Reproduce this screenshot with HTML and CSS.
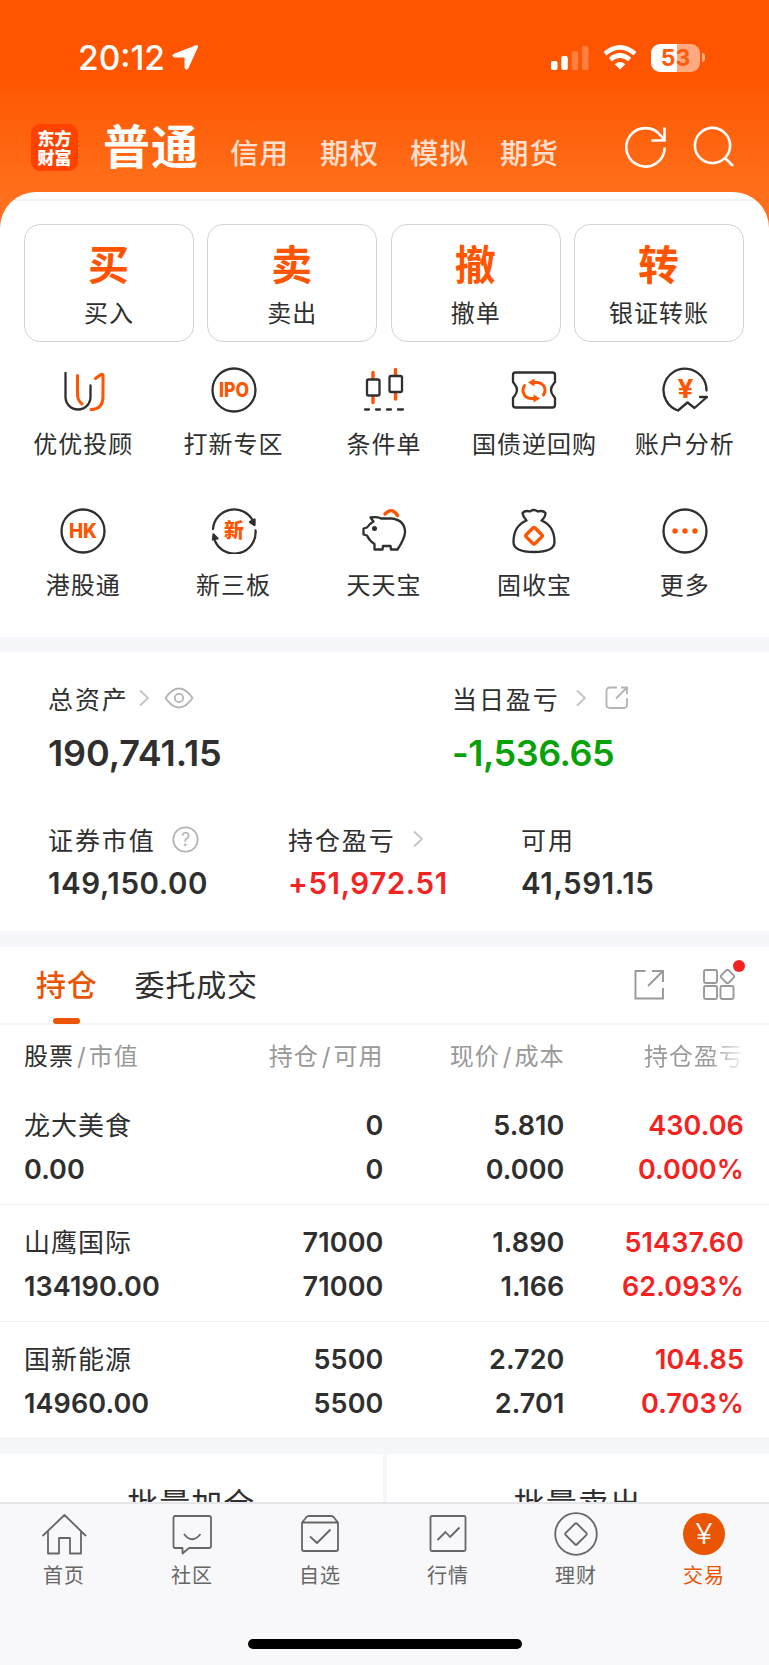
FILE: index.html
```html
<!DOCTYPE html>
<html lang="zh-CN">
<head>
  <meta charset="UTF-8" />
  <meta name="viewport" content="width=device-width, initial-scale=1.0" />
  <title>交易</title>
  <link rel="stylesheet" href="styles.css">
</head>
<body>
  <div class="app">
    <header class="header">
      <div class="status-bar">
        <span class="time">20:12</span>
        <svg class="location" width="28" height="27" viewBox="0 0 28 27"><path d="M25.5 1.5 2.5 10.5Q1 12 3 13H14V24Q15 26.5 16.8 24.500L26.500 3Q26.800 1 25.500 1.500Z" fill="#fff" stroke="#fff" stroke-width="1" stroke-linejoin="round"/></svg>
        <div class="status-icons">
          <svg width="38" height="24" viewBox="0 0 38 24" fill="#fff">
            <rect x="0" y="15" width="6.500" height="9" rx="2"/>
            <rect x="10.300" y="10" width="6.500" height="14" rx="2"/>
            <rect x="20.700" y="5" width="6.500" height="19" rx="2" opacity=".25"/>
            <rect x="31" y="0" width="6.500" height="24" rx="2" opacity=".25"/>
          </svg>
          <svg class="wifi" width="34" height="25" viewBox="0 0 34 25" fill="none" stroke="#fff" stroke-width="4.600">
            <path d="M2 8.700Q17-3.800 32 8.700"/>
            <path d="M7.300 14.500Q17 6.500 26.700 14.500"/>
            <path d="M17 24.500 11.700 19.200Q17 15 22.300 19.200Z" fill="#fff" stroke="none"/>
          </svg>
          <div class="battery"><span>53</span></div>
          <span class="battery-cap"></span>
        </div>
      </div>
      <nav class="account-nav">
        <div class="logo">东方<br>财富</div>
        <span class="account active">普通</span>
        <span class="account">信用</span>
        <span class="account">期权</span>
        <span class="account">模拟</span>
        <span class="account">期货</span>
        <svg class="refresh" width="42" height="42" viewBox="0 0 42 42" fill="none" stroke="#fff" stroke-width="2.600"><path d="M39.700 21.500A19.200 19.200 0 1 1 36 10L39.500 14M26.500 14.500H39.500V1.500"/></svg>
        <svg width="42" height="42" viewBox="0 0 42 42" fill="none" stroke="#fff" stroke-width="2.600"><circle cx="19.500" cy="19.500" r="17.600"/><path d="M31.500 31.500 40 40"/></svg>
      </nav>
    </header>

    <main class="content">
      <section class="sheet">
        <div class="trade-cards">
          <a class="trade-card"><b>买</b><span>买入</span></a>
          <a class="trade-card"><b>卖</b><span>卖出</span></a>
          <a class="trade-card"><b>撤</b><span>撤单</span></a>
          <a class="trade-card"><b>转</b><span>银证转账</span></a>
        </div>
        <div class="shortcuts">
          <a class="shortcut">
            <svg class="icon" viewBox="0 0 46 46"><path d="M5.500 6V30A12.500 12.500 0 0 0 30.500 30V18.500"/><path class="hot" d="M17.500 8.500V27Q17.500 33.500 22 37M35.500 11.500 41 7.500Q43 6.500 43 9V29Q43 42.500 31 42.500"/></svg>
            <span>优优投顾</span>
          </a>
          <a class="shortcut">
            <svg class="icon" viewBox="0 0 46 46"><circle cx="23" cy="23" r="21.500"/><text x="23" y="30" font-size="20" textLength="30" lengthAdjust="spacingAndGlyphs">IPO</text></svg>
            <span>打新专区</span>
          </a>
          <a class="shortcut">
            <svg class="icon" viewBox="0 0 46 46"><path class="hot thick" d="M12 5.500V11M12 30V35.500M34.500 2.500V8M34.500 26.500V32"/><rect x="6" y="12.500" width="12.500" height="16" rx="1.500"/><rect x="28.500" y="9" width="12.500" height="16" rx="1.500"/><path d="M4 42.500H8M15 42.500H19M26 42.500H30M37 42.500H42"/></svg>
            <span>条件单</span>
          </a>
          <a class="shortcut">
            <svg class="icon" viewBox="0 0 46 46"><path d="M4.500 5.500H41.500Q44 5.500 44 8V15L42.500 17Q37.500 23 42.500 29L44 31V38Q44 40.500 41.500 40.500H4.500Q2 40.500 2 38V31L3.500 29Q8.500 23 3.500 17L2 15V8Q2 5.500 4.500 5.500Z"/><path class="hot" d="M13.500 18.500C10 24 13 31 20 31.500H24M32.500 28C36 22 33 16 26 15.500H22"/><path class="hot fill" d="M23.500 11.500V19.500L17 15.500ZM22.500 27.500V35.500L29 31.500Z"/></svg>
            <span>国债逆回购</span>
          </a>
          <a class="shortcut">
            <svg class="icon" viewBox="0 0 46 46"><path d="M44.500 23.500A21.500 21.500 0 1 0 16 43.500L25.500 35.500 32.500 41 45 30H38"/><text class="yuan" x="23.500" y="31" font-size="26" textLength="16" lengthAdjust="spacingAndGlyphs">¥</text></svg>
            <span>账户分析</span>
          </a>
          <a class="shortcut">
            <svg class="icon" viewBox="0 0 46 46"><circle cx="23" cy="23" r="21.500"/><text x="23" y="30" font-size="20" textLength="28" lengthAdjust="spacingAndGlyphs">HK</text></svg>
            <span>港股通</span>
          </a>
          <a class="shortcut">
            <svg class="icon" viewBox="0 0 46 46"><path d="M2 21A21.200 21.200 0 0 1 42 13M44.500 22.500A21.200 21.200 0 0 1 4 33"/><path class="solid" d="M39 14 43.500 11.500 43.500 17ZM2 31.500 2.500 26.500 6.500 30.500Z"/><text class="cjk" x="23" y="30" font-size="20">新</text></svg>
            <span>新三板</span>
          </a>
          <a class="shortcut">
            <svg class="icon" viewBox="0 0 46 46"><path class="hot thick" d="M24 6Q31-1.500 36.500 7.500"/><path d="M12.500 13.500 9.500 9.500Q16 8.500 20 10.500H31Q44 12.500 44 24 44 30 36.500 41.500H30L29.500 38H22L21.500 41.500H13.500V36Q8.500 33 6 27.500L2.500 26.500V20.500L6 19.500Q8 16 12.500 13.500Z"/><circle class="eye" cx="13.500" cy="20.500" r="2.500"/></svg>
            <span>天天宝</span>
          </a>
          <a class="shortcut">
            <svg class="icon" viewBox="0 0 46 46"><path d="M15.500 12.500Q12 9 11.500 5 14 2 19 3.500 22.500 0.500 27 3.500 32 2 34.500 5 34.500 9 30.500 12.500C39 16 43.500 23 43.500 34Q43.500 44 23 44T2.500 34C2.500 23 7 16 15.500 12.500Z"/><rect class="hot thick" x="16.800" y="21.500" width="12.500" height="12.500" rx="1.500" transform="rotate(45 23 27.700)"/></svg>
            <span>固收宝</span>
          </a>
          <a class="shortcut">
            <svg class="icon" viewBox="0 0 46 46"><circle cx="23" cy="23" r="21.500"/><g class="dots"><circle cx="13" cy="23" r="2.700"/><circle cx="23" cy="23" r="2.700"/><circle cx="33" cy="23" r="2.700"/></g></svg>
            <span>更多</span>
          </a>
        </div>
      </section>

      <section class="assets">
        <div class="asset-row main-row">
          <div class="asset">
            <div class="asset-label">总资产
              <svg class="chevron" width="10" height="18" viewBox="0 0 10 18"><path d="M1 1.500 9 9 1 16.500"/></svg>
              <svg class="eye-icon" width="30" height="22" viewBox="0 0 30 22"><path d="M1.500 11Q8 1.500 15 1.500T28.500 11Q22 20.500 15 20.500T1.500 11Z"/><circle cx="15" cy="11" r="4.200"/></svg>
            </div>
            <div class="asset-value">190,741.15</div>
          </div>
          <div class="asset today">
            <div class="asset-label">当日盈亏
              <svg class="chevron" width="10" height="18" viewBox="0 0 10 18"><path d="M1 1.500 9 9 1 16.500"/></svg>
              <svg class="share-icon" width="24" height="24" viewBox="0 0 24 24"><path d="M12 1.500H5Q1.500 1.500 1.500 5V18.500Q1.500 22 5 22H18.500Q22 22 22 18.500V12M16 1.500H22V8M22 1.500 11 12.500"/></svg>
            </div>
            <div class="asset-value down">-1,536.65</div>
          </div>
        </div>
        <div class="asset-row sub-row">
          <div class="asset">
            <div class="asset-label">证券市值
              <svg class="help-icon" width="27" height="27" viewBox="0 0 27 27"><circle cx="13.500" cy="13.500" r="12.200"/><text x="13.500" y="20">?</text></svg>
            </div>
            <div class="asset-value">149,150.00</div>
          </div>
          <div class="asset">
            <div class="asset-label">持仓盈亏
              <svg class="chevron" width="10" height="18" viewBox="0 0 10 18"><path d="M1 1.500 9 9 1 16.500"/></svg>
            </div>
            <div class="asset-value up">+51,972.51</div>
          </div>
          <div class="asset">
            <div class="asset-label">可用</div>
            <div class="asset-value">41,591.15</div>
          </div>
        </div>
      </section>

      <section class="positions">
        <div class="tabs">
          <span class="tab active">持仓</span>
          <span class="tab">委托成交</span>
          <svg class="tool share" width="32" height="32" viewBox="0 0 32 32"><path d="M12.500 2H2.500V29.500H30V19M19 2H30V13M30 2 15 17"/></svg>
          <span class="tool-more">
            <svg class="tool" width="34" height="34" viewBox="0 0 34 34"><rect x="2" y="2" width="13" height="13" rx="1.500"/><rect x="2" y="18" width="13" height="13" rx="1.500"/><rect x="18.500" y="18" width="13" height="13" rx="1.500"/><rect x="20.200" y="3.300" width="10.500" height="10.500" rx="2" transform="rotate(45 25.500 8.600)"/></svg>
            <i class="red-dot"></i>
          </span>
        </div>
        <div class="table-head">
          <span><em>股票</em><i>/</i>市值</span>
          <span>持仓<i>/</i>可用</span>
          <span>现价<i>/</i>成本</span>
          <span class="fade">持仓盈亏</span>
        </div>
        <div class="stock">
          <div><span class="name">龙大美食</span><span>0.00</span></div>
          <div><span>0</span><span>0</span></div>
          <div><span>5.810</span><span>0.000</span></div>
          <div class="up"><span>430.06</span><span>0.000%</span></div>
        </div>
        <div class="stock">
          <div><span class="name">山鹰国际</span><span>134190.00</span></div>
          <div><span>71000</span><span>71000</span></div>
          <div><span>1.890</span><span>1.166</span></div>
          <div class="up"><span>51437.60</span><span>62.093%</span></div>
        </div>
        <div class="stock">
          <div><span class="name">国新能源</span><span>14960.00</span></div>
          <div><span>5500</span><span>5500</span></div>
          <div><span>2.720</span><span>2.701</span></div>
          <div class="up"><span>104.85</span><span>0.703%</span></div>
        </div>
      </section>

      <section class="batch">
        <a>批量加仓</a>
        <a>批量卖出</a>
      </section>
    </main>

    <footer class="tab-bar">
      <nav class="tab-items">
        <a class="tab-item">
          <svg width="46" height="46" viewBox="0 0 46 46"><path d="M1.500 25 23.500 4 45 25M7 20.500V42.500H18V27H29V42.500H40V20.500"/></svg>
          <span>首页</span>
        </a>
        <a class="tab-item">
          <svg width="46" height="46" viewBox="0 0 46 46"><path d="M6 5H40Q42 5 42 7V35Q42 37 40 37H20L13.500 42.500V37H6Q4.500 37 4.500 35V7Q4.500 5 6 5ZM15 23Q23 33.500 31.500 23"/></svg>
          <span>社区</span>
        </a>
        <a class="tab-item">
          <svg width="46" height="46" viewBox="0 0 46 46"><path d="M5 11.500H41V38Q41 40 39 40H7Q5 40 5 38V11.500L10 5.500Q11 5 12 5H34Q35.500 5 36.500 6L41 11.500M13 25.500 20 32 33.500 18.500"/></svg>
          <span>自选</span>
        </a>
        <a class="tab-item">
          <svg width="46" height="46" viewBox="0 0 46 46"><rect x="5.500" y="5" width="35" height="35" rx="1.500"/><path d="M12.500 29 20.500 21 25 26 34.500 16.500"/></svg>
          <span>行情</span>
        </a>
        <a class="tab-item">
          <svg width="46" height="46" viewBox="0 0 46 46"><circle cx="23" cy="23" r="20.800"/><rect x="15" y="15" width="16" height="16" rx="1.500" transform="rotate(45 23 23)"/></svg>
          <span>理财</span>
        </a>
        <a class="tab-item active">
          <svg width="46" height="46" viewBox="0 0 46 46"><circle cx="23" cy="23" r="21"/><text x="23" y="33" textLength="17" lengthAdjust="spacingAndGlyphs">¥</text></svg>
          <span>交易</span>
        </a>
      </nav>
      <div class="home-indicator"></div>
    </footer>
  </div>
</body>
</html>
```
FILE: styles.css
```css
* {
  margin: 0;
  padding: 0;
  box-sizing: border-box;
}

body {
  font-family: Inter, "Noto Sans CJK SC", sans-serif;
  background: #fff;
  color: #2f2f2f;
}

svg {
  display: block;
  flex: none;
}

.app {
  display: flex;
  flex-direction: column;
  width: 769px;
  height: 1665px;
  overflow: hidden;
}

/* header */
.header {
  flex: none;
  height: 240px;
  background: linear-gradient(#ff5500 0, #ff5500 75px, #ff6c17 175px, #ff6e1a 192px);
  color: #fff;
}

.status-bar {
  display: flex;
  align-items: center;
  height: 115px;
  padding: 0 64px 0 78px;
}

.time {
  width: 93px;
  font-size: 33.5px;
  font-weight: 500;
  letter-spacing: 0;
  white-space: nowrap;
}

.status-icons {
  display: flex;
  align-items: center;
  margin-left: auto;
}

.wifi {
  margin: 0 14px;
}

.battery {
  width: 49px;
  height: 28px;
  border-radius: 9px;
  background: linear-gradient(90deg, #fff 54%, #ffa980 54%);
  color: #ff5a0a;
  font-size: 23px;
  font-weight: 700;
  line-height: 28px;
  text-align: center;
}

.battery-cap {
  width: 3px;
  height: 9px;
  margin-left: 2px;
  border-radius: 0 3px 3px 0;
  background: #ffa980;
}

.account-nav {
  display: flex;
  align-items: center;
  height: 64px;
  padding: 0 34px 0 31px;
}

.logo {
  width: 47px;
  height: 47px;
  margin-right: 25px;
  padding-top: 4px;
  border-radius: 9px;
  background: #ff4200;
  font-family: "Noto Sans CJK SC", sans-serif;
  font-size: 17px;
  font-weight: 900;
  line-height: 19px;
  text-align: center;
}

.account {
  width: 90px;
  padding-top: 14px;
  font-size: 28.5px;
  font-weight: 500;
  letter-spacing: 1px;
  line-height: 40px;
  color: #ffe0d0;
}

.account.active {
  width: 127px;
  padding: 0;
  font-size: 47px;
  font-weight: 700;
  line-height: 60px;
  color: #fff;
}

.refresh {
  margin-left: auto;
  margin-right: 26px;
}

/* white sheet with the trade entries */
.content {
  flex: 1;
  min-height: 0;
  margin-top: -48px;
  overflow: hidden;
}

.sheet {
  height: 445px;
  padding-top: 32px;
  border-radius: 36px 36px 0 0;
  background: linear-gradient(#fff 7px, #f3f3f3 7px, #f3f3f3 9px, #fff 9px);
}

.trade-cards {
  display: grid;
  grid-template-columns: repeat(4, 1fr);
  gap: 13.5px;
  padding: 0 25px 0 24px;
}

.trade-card {
  display: flex;
  flex-direction: column;
  align-items: center;
  height: 118px;
  padding-top: 14px;
  border: 1px solid #d4d4d4;
  border-radius: 16px;
}

.trade-card b {
  margin-right: 1px;
  font-size: 41px;
  font-weight: 700;
  line-height: 52px;
  color: #ff5500;
}

.trade-card span,
.shortcut span {
  font-size: 24px;
  letter-spacing: 1px;
}

.trade-card span {
  line-height: 46px;
}

.shortcuts {
  display: grid;
  grid-template-columns: repeat(5, 1fr);
  row-gap: 41px;
  padding: 25px 9px 0 8px;
}

.shortcut {
  display: flex;
  flex-direction: column;
  align-items: center;
  height: 100px;
}

.shortcut span {
  margin-top: 12px;
  line-height: 40px;
  white-space: nowrap;
}

.icon {
  width: 46px;
  height: 46px;
  fill: none;
  stroke: #2f2f2f;
  stroke-width: 2.3;
  stroke-linecap: round;
  stroke-linejoin: round;
}

.icon .hot {
  stroke: #ff5500;
  stroke-width: 3;
}

.icon .thick {
  stroke-width: 3.4;
}

.icon .fill,
.icon .dots {
  fill: #ff5500;
  stroke: none;
}

.icon .solid,
.icon .eye {
  fill: #2f2f2f;
}

.icon .eye {
  stroke: none;
}

.icon text {
  fill: #ff5500;
  stroke: none;
  font-family: Inter, sans-serif;
  font-weight: 800;
  text-anchor: middle;
}

.icon .yuan {
  font-weight: 700;
}

.icon .cjk {
  font-family: "Noto Sans CJK SC", sans-serif;
}

/* assets */
.assets {
  height: 294px;
  padding-top: 28px;
  border-top: 15px solid #f6f7fa;
}

.asset-row {
  display: flex;
  padding-left: 48px;
}

.asset-label {
  display: flex;
  align-items: center;
  height: 36px;
  font-size: 25px;
  letter-spacing: 1.9px;
  white-space: nowrap;
}

.asset-label svg {
  fill: none;
  stroke: #b4b4b4;
  stroke-width: 1.8;
}

.asset-label .chevron {
  margin-left: 10px;
  stroke: #c4c4c4;
}

.eye-icon {
  margin-left: 15px;
}

.chevron + .share-icon {
  margin-left: 19px;
}

.help-icon {
  margin-left: 16px;
}

.help-icon text {
  fill: #b4b4b4;
  stroke: none;
  font-size: 18px;
  letter-spacing: 0;
  text-anchor: middle;
}

.asset-value {
  font-weight: 600;
}

.main-row .asset {
  width: 404px;
  flex: none;
}

.main-row .asset-value {
  height: 105px;
  font-size: 36px;
  letter-spacing: -0.1px;
  line-height: 74px;
}

.main-row .today .chevron {
  margin-left: 16px;
}

.main-row .down {
  color: #07a207;
  letter-spacing: -0.5px;
}

.sub-row .asset {
  width: 240px;
  flex: none;
}

.sub-row .asset + .asset {
  width: 233px;
}

.sub-row .asset-value {
  font-size: 29.5px;
  letter-spacing: 0.6px;
  line-height: 52px;
}

.sub-row .chevron {
  margin-left: 17px;
}

.up {
  color: #f52222;
}

/* positions */
.positions {
  border-top: 16px solid #f6f7fa;
}

.tabs {
  display: flex;
  align-items: center;
  height: 78px;
  padding: 0 33px 0 36px;
  border-bottom: 2px solid #f5f6f8;
}

.tab {
  position: relative;
  margin-right: 37px;
  font-size: 30px;
  letter-spacing: 0.8px;
  line-height: 78px;
}

.tab.active {
  color: #ea5504;
  font-weight: 500;
}

.tab.active::after {
  content: "";
  position: absolute;
  left: 17px;
  bottom: 0;
  width: 27px;
  height: 6px;
  border-radius: 3px;
  background: #ea5504;
}

.tool {
  fill: none;
  stroke: #999;
  stroke-width: 1.9;
}

.tool.share {
  margin-left: auto;
  margin-right: 37px;
}

.tool-more {
  position: relative;
}

.red-dot {
  position: absolute;
  top: -8px;
  right: -9px;
  width: 12px;
  height: 12px;
  border-radius: 50%;
  background: #f52222;
}

.table-head,
.stock {
  display: grid;
  grid-template-columns: 178px 181.5px 181px 179.5px;
  padding: 0 25px 0 24px;
}

.table-head {
  height: 63px;
  font-size: 24px;
  letter-spacing: 1px;
  line-height: 63px;
  color: #999;
  text-align: right;
}

.table-head span:first-child {
  text-align: left;
}

.table-head em {
  font-style: normal;
  color: #2f2f2f;
}

.table-head i {
  margin: 0 2px 0 3px;
  font-style: normal;
}

.table-head .fade {
  background: linear-gradient(90deg, #999 145px, #fff 182px);
  background-clip: text;
  -webkit-background-clip: text;
  color: transparent;
}

.stock {
  height: 117px;
  padding-top: 16px;
  border-bottom: 1px solid #eef0f3;
  font-size: 27px;
  font-weight: 600;
  letter-spacing: 0.1px;
  text-align: right;
}

.stock span {
  display: block;
  height: 44px;
  line-height: 44px;
}

.stock div:first-child {
  text-align: left;
  white-space: nowrap;
}

.stock .name {
  font-size: 26px;
  font-weight: 400;
  letter-spacing: 1px;
}

/* batch buttons */
.batch {
  display: grid;
  grid-template-columns: 1fr 1fr;
  gap: 4px;
  border-top: 15px solid #f6f7fa;
  background: #f6f7fa;
}

.batch a {
  height: 100px;
  background: #fff;
  font-size: 31px;
  letter-spacing: 1px;
  line-height: 100px;
  text-align: center;
}

/* bottom tab bar */
.tab-bar {
  flex: none;
  height: 163px;
  border-top: 2px solid #e6e6ea;
  background: #f8f8fa;
}

.tab-items {
  display: grid;
  grid-template-columns: repeat(6, 128px);
  height: 135px;
  padding-top: 7px;
}

.tab-item {
  display: flex;
  flex-direction: column;
  align-items: center;
  font-size: 20px;
  letter-spacing: 1px;
  color: #666;
}

.tab-item span {
  margin-top: 4px;
  line-height: 30px;
}

.tab-item svg {
  fill: none;
  stroke: #666;
  stroke-width: 1.8;
  stroke-linejoin: round;
}

.tab-item.active {
  color: #ea5504;
}

.tab-item.active circle {
  fill: #ea5504;
  stroke: none;
}

.tab-item.active text {
  fill: #fff;
  stroke: none;
  font-size: 28px;
  font-weight: 300;
  letter-spacing: 0;
  text-anchor: middle;
}

.home-indicator {
  width: 274px;
  height: 10px;
  margin: 0 auto;
  border-radius: 5px;
  background: #000;
}
```
